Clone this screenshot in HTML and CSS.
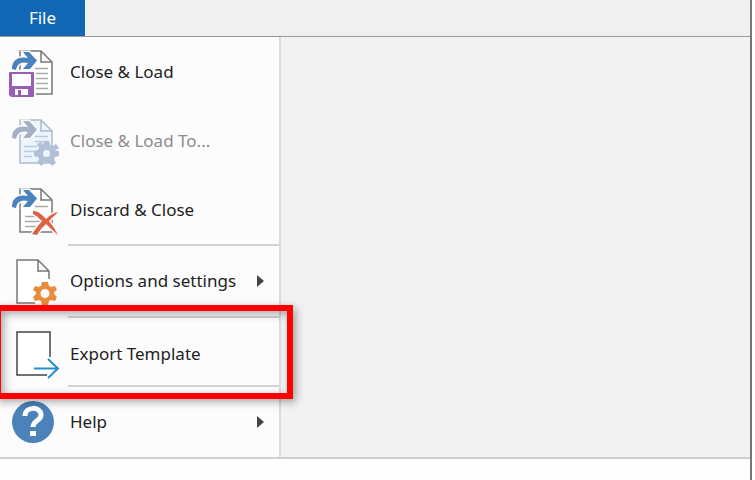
FILE: index.html
```html
<!DOCTYPE html>
<html lang="en">
<head>
<meta charset="utf-8">
<title>File menu</title>
<link rel="stylesheet" href="styles.css">
</head>
<body>
<div class="window">
  <header class="ribbon"><button class="tab" type="button">File</button></header>
  <main class="backstage">
    <nav class="menu">
      <button class="item" type="button">
        <svg class="icon" viewBox="0 0 52 50">
          <path class="page" d="M15 4H36L47 15V47H15z"/><path class="line" d="M36 4V15H47"/>
          <path class="rule" d="M30 21.500H43M30 26.500H43M30 31.500H43M30 36.500H43M30 41.500H43"/>
          <path class="swoosh-halo" d="M7 22C7 13 13 9 23 11L18 5H24L32 13.500L25 22H18L23 16C16 14 12 17 11 23z"/>
          <path class="swoosh" d="M7 22C7 13 13 9 23 11L18 5H24L32 13.500L25 22H18L23 16C16 14 12 17 11 23z"/>
          <path class="disk-halo" d="M2 23H31V50H2z"/>
          <path class="disk" fill-rule="evenodd" d="M5 25H28Q29 25 29 26V49Q29 50 28 50H6L4 48V26Q4 25 5 25zM7 27V39H26V27zM10 42V48H13V43H16V48H23V42z"/>
        </svg>
        <span class="label">Close &amp; Load</span>
      </button>
      <button class="item" type="button" disabled>
        <svg class="icon faded" viewBox="0 0 52 50">
          <path class="page" d="M15 4H36L47 15V47H15z"/><path class="line" d="M36 4V15H47"/>
          <path class="rule" d="M19 30.500H32M19 35.500H30M19 40.500H27M30 25.500H43M30 20.500H43"/>
          <path class="swoosh-halo" d="M7 22C7 13 13 9 23 11L18 5H24L32 13.500L25 22H18L23 16C16 14 12 17 11 23z"/>
          <path class="swoosh" d="M7 22C7 13 13 9 23 11L18 5H24L32 13.500L25 22H18L23 16C16 14 12 17 11 23z"/>
          <path class="gear" fill-rule="evenodd" d="M39 25H44L45 29L48 30L51 28L54 32L50 35H54V40L50 41L49 43L51 47L47 50L44 46H39L37 50L32 47L34 43L33 41L29 40V35L33 34L34 32L32 28L36 26L38 29zM41.500 34A3.500 3.500 0 1 0 41.500 41A3.500 3.500 0 1 0 41.500 34z"/>
        </svg>
        <span class="label">Close &amp; Load To...</span>
      </button>
      <button class="item" type="button">
        <svg class="icon" viewBox="0 0 52 50">
          <path class="page" d="M15 4H36L47 15V47H15z"/><path class="line" d="M36 4V15H47"/>
          <path class="rule" d="M30 21.500H43M20 31.500H34M20 36.500H37M20 41.500H32"/>
          <path class="swoosh-halo" d="M7 22C7 13 13 9 23 11L18 5H24L32 13.500L25 22H18L23 16C16 14 12 17 11 23z"/>
          <path class="swoosh" d="M7 22C7 13 13 9 23 11L18 5H24L32 13.500L25 22H18L23 16C16 14 12 17 11 23z"/>
          <path class="cross-halo" d="M28 26Q33 25 41 34Q47 28 53 27Q49 31 44 36Q49 42 53 50Q46 44 41 39Q35 44 32 50L27 49Q31 43 37 36Q32 31 28 29z"/>
          <path class="cross" d="M28 26Q33 25 41 34Q47 28 53 27Q49 31 44 36Q49 42 53 50Q46 44 41 39Q35 44 32 50L27 49Q31 43 37 36Q32 31 28 29z"/>
        </svg>
        <span class="label">Discard &amp; Close</span>
      </button>
      <hr class="separator">
      <button class="item" type="button">
        <svg class="icon" viewBox="0 0 52 50">
          <path class="sheet" d="M12 4H33L44 15V47H12z"/>
          <path class="gear-halo" d="M37 26H43L44 30L51 29L54 34L50 37L54 41L51 46L44 46V49H36L35 46L29 46L26 41L30 37L26 34L30 29L36 30z"/>
          <path class="line" d="M30 47H12V4H33L44 15V23M33 4V15H44"/>
          <path class="gear" fill-rule="evenodd" d="M37 26H43L44 30L46 31L50 30L52 34L49 36V38L52 41L50 45L46 44L44 45L43 49H37L36 45L34 44L30 45L28 41L31 38V36L28 34L30 30L34 31L36 30zM40 33A4.500 4.500 0 1 0 40 42A4.500 4.500 0 1 0 40 33z"/>
        </svg>
        <span class="label">Options and settings</span><span class="arrow"></span>
      </button>
      <hr class="separator">
      <div class="highlighted">
        <button class="item" type="button">
          <svg class="icon" viewBox="0 0 52 50">
            <path class="sheet" d="M12 3H45V46H12z"/>
            <path class="frame" d="M42 46H12V3H45V28"/>
            <path class="export" d="M29 39.500H53M43 30L53 39.500L43 49"/>
          </svg>
          <span class="label">Export Template</span>
        </button>
      </div>
      <hr class="separator">
      <button class="item" type="button">
        <svg class="icon" viewBox="0 0 52 50">
          <circle class="help" cx="28" cy="25" r="21"/>
          <path class="question" d="M20 19C20 9 36 9 36 18C36 24 28 23 28 30"/><path class="dot" d="M25 34H31V39H25z"/>
        </svg>
        <span class="label">Help</span><span class="arrow"></span>
      </button>
    </nav>
  </main>
</div>
</body>
</html>
```
FILE: styles.css
```css
* { box-sizing: border-box; }
body { margin: 0; background: #fff; font: 17px/24px "Noto Sans", "Open Sans", sans-serif; color: #222; overflow: hidden; }
.window { min-height: 100vh; margin-right: 3px; border-right: 2px solid #777; background: #fefefe; }
.ribbon { background: #f0f0f0; border-bottom: 1px solid #999; }
.tab { display: block; width: 85px; height: 36px; padding: 0; border: 0; background: #1267b4; color: #fff; font: inherit; }
.backstage { display: flex; background: #f2f2f2; border-bottom: 2px solid #d0d0d0; }
.menu { width: 281px; background: #fcfcfc; border-right: 2px solid #dadada; }
.item { display: flex; align-items: center; width: 100%; height: 69px; padding: 0 15px 0 5px; border: 0; background: none; color: inherit; font: inherit; text-align: left; }
.item:disabled { color: #8b8b8f; }
.icon { flex: none; width: 52px; height: 50px; margin-right: 13px; overflow: visible; }
.arrow { margin-left: auto; border: solid transparent; border-width: 6px 0 6px 7px; border-left-color: #444; }
.separator { height: 2px; margin: 0 0 0 68px; border: 0; background: #d2d2d2; }
.separator + .item { height: 70px; }
.highlighted { position: relative; padding-top: 4px; }
.highlighted .item { height: 63px; }
.highlighted::after { content: ""; position: absolute; inset: -13px -14px -14px -5px; border: 6px solid #f00; box-shadow: 3px 3px 8px #0005, inset 3px 3px 8px #0005; pointer-events: none; }
.page, .sheet { fill: #fff; }
.page, .line { stroke: #777; stroke-width: 1.500; }
.line, .rule, .frame, .export, .question { fill: none; }
.rule { stroke: #aaa; stroke-width: 1.500; }
.swoosh { fill: #4a82bb; }
.swoosh-halo, .cross-halo { fill: #fcfcfc; stroke: #fcfcfc; stroke-width: 3; }
.disk-halo, .gear-halo { fill: #fcfcfc; }
.disk { fill: #955fb5; }
.cross { fill: #dc6245; }
.gear { fill: #e98b3c; }
.frame { stroke: #444; stroke-width: 1.500; }
.export { stroke: #238fd0; stroke-width: 2; }
.help { fill: #4a82b9; }
.question { stroke: #fff; stroke-width: 5; }
.dot { fill: #fff; }
.faded .page { fill: #edf5fc; }
.faded .page, .faded .line { stroke: #a9bad0; }
.faded .rule { stroke: #bac9dc; }
.faded .swoosh { fill: #a3b0c6; }
.faded .gear { fill: #b2c0d7; }
```
